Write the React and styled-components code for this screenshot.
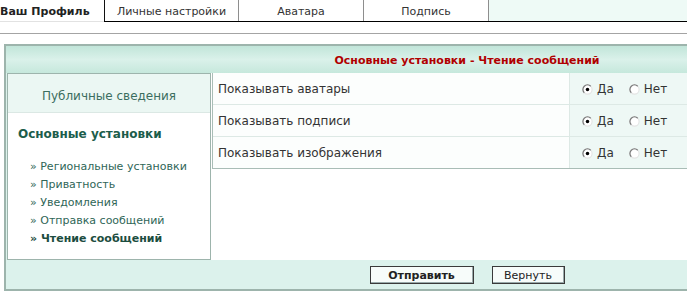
import React from "react";
import styled, { createGlobalStyle } from "styled-components";

const Global = createGlobalStyle`
  html, body { margin: 0; padding: 0; background: #fff; overflow: hidden; }
  body { font-family: "DejaVu Sans", Verdana, sans-serif; color: #333; }
`;

const Viewport = styled.div`
  width: 100vw;
  overflow: hidden;
`;

const Page = styled.div`
  width: 940px;
`;

const TabBar = styled.div`
  display: flex;
  height: 22px;
`;

const ActiveTab = styled.div`
  width: 104px;
  box-sizing: border-box;
  border-bottom: 1px solid #e2e2e2;
  font-size: 11px;
  font-weight: bold;
  color: #222;
  padding-top: 4px;
  line-height: 16px;
  white-space: nowrap;
`;

const TabGroup = styled.div`
  flex: 1;
  display: flex;
  border-bottom: 1px solid #000;
  background: #eefaf6;
`;

const Tab = styled.div`
  width: ${(p) => p.$w}px;
  box-sizing: border-box;
  background: #fff;
  border-left: 1px solid ${(p) => (p.$first ? "#111" : "#8e8e8e")};
  border-right: ${(p) => (p.$last ? "1px solid #8e8e8e" : "none")};
  font-size: 11px;
  color: #333;
  text-align: center;
  padding-top: 4px;
  line-height: 16px;
  white-space: nowrap;
`;

const Rule = styled.div`
  margin-top: 11px;
  height: 1px;
  background: #a4a4a4;
`;

const Box = styled.div`
  margin: 10px 0 0 4px;
  width: 926px;
  box-sizing: border-box;
  border: 2px solid #9db4ac;
  background: #dcf2ec;
`;

const Header = styled.div`
  height: 27px;
  background: linear-gradient(#c1e5d9 0%, #daf1ea 50%, #c6e8dc 100%);
  display: flex;
  align-items: center;
  justify-content: center;
  padding-top: 1px;
  box-sizing: border-box;
  font-size: 11px;
  font-weight: bold;
  color: #b00000;
`;

const Body = styled.div`
  display: flex;
  align-items: flex-start;
  padding-left: 1px;
`;

const Sidebar = styled.div`
  width: 204px;
  height: 187px;
  box-sizing: border-box;
  border: 1px solid #9db4ac;
  background: #fff;
`;

const PublicBlock = styled.div`
  height: 39px;
  box-sizing: border-box;
  background: #ebf7f3;
  border-bottom: 1px solid #dbe8e4;
  font-size: 12px;
  color: #3b6e5f;
  text-align: center;
  line-height: 44px;
`;

const SectionTitle = styled.div`
  margin: 13px 0 0 10px;
  font-size: 12px;
  font-weight: bold;
  color: #1c5d4b;
  line-height: 16px;
`;

const NavList = styled.ul`
  list-style: none;
  margin: 16px 0 0 22px;
  padding: 0;
`;

const NavItem = styled.li`
  font-size: 11px;
  line-height: 18px;
  color: ${(p) => (p.$active ? "#1c4d40" : "#2f6657")};
  font-weight: ${(p) => (p.$active ? "bold" : "normal")};
  white-space: nowrap;
`;

const Content = styled.div`
  flex: 1;
  height: 187px;
  background: #fff;
  padding-left: 1px;
`;

const Table = styled.div`
  border: 1px solid #a9bdb6;
  border-top: none;
`;

const Row = styled.div`
  display: flex;
  height: 31px;
  border-bottom: 1px solid #dde9e5;
  &:last-child { border-bottom: none; }
`;

const Label = styled.div`
  width: 357px;
  box-sizing: border-box;
  padding: 1px 0 0 5px;
  background: #fcfefd;
  display: flex;
  align-items: center;
  font-size: 12px;
  color: #333;
  border-right: 1px solid #dde9e5;
`;

const Options = styled.div`
  flex: 1;
  background: #eef8f5;
  display: flex;
  align-items: center;
  padding: 1px 0 0 12px;
  gap: 15px;
`;

const Option = styled.label`
  display: flex;
  align-items: center;
  gap: 4px;
  font-size: 12px;
  color: #333;
`;

const Footer = styled.div`
  height: 29px;
  display: flex;
  justify-content: center;
  align-items: flex-start;
  gap: 18px;
  padding-top: 6px;
  box-sizing: border-box;
`;

const Button = styled.button`
  width: ${(p) => p.$w}px;
  height: 18px;
  padding: 0;
  border: 1px solid #3a3a3a;
  box-shadow: inset -1px -1px 0 #9aa;
  background: #f7fcfa;
  font-family: "DejaVu Sans", Verdana, sans-serif;
  font-size: 11px;
  font-weight: ${(p) => (p.$primary ? "bold" : "normal")};
  color: #222;
`;

function Radio({ checked }) {
  return (
    <svg width="11" height="11" viewBox="0 0 12 12">
      <circle cx="6" cy="6" r="5" fill="#fff" stroke="#e4e4e4" strokeWidth="1.2" />
      <path d="M2.46 9.54 A5 5 0 0 1 9.54 2.46" fill="none" stroke="#7a7a7a" strokeWidth="1.3" />
      {checked && <circle cx="6" cy="6" r="1.9" fill="#000" />}
    </svg>
  );
}

const rows = ["Показывать аватары", "Показывать подписи", "Показывать изображения"];
const nav = [
  "Региональные установки",
  "Приватность",
  "Уведомления",
  "Отправка сообщений",
  "Чтение сообщений",
];

export default function App() {
  return (
    <Viewport>
      <Global />
      <Page>
        <TabBar>
          <ActiveTab>Ваш Профиль</ActiveTab>
          <TabGroup>
            <Tab $w={134} $first>Личные настройки</Tab>
            <Tab $w={125}>Аватара</Tab>
            <Tab $w={126} $last>Подпись</Tab>
          </TabGroup>
        </TabBar>
        <Rule />
        <Box>
          <Header>Основные установки - Чтение сообщений</Header>
          <Body>
            <Sidebar>
              <PublicBlock>Публичные сведения</PublicBlock>
              <SectionTitle>Основные установки</SectionTitle>
              <NavList>
                {nav.map((n, i) => (
                  <NavItem key={n} $active={i === nav.length - 1}>
                    » {n}
                  </NavItem>
                ))}
              </NavList>
            </Sidebar>
            <Content>
              <Table>
                {rows.map((r) => (
                  <Row key={r}>
                    <Label>{r}</Label>
                    <Options>
                      <Option>
                        <Radio checked /> Да
                      </Option>
                      <Option>
                        <Radio /> Нет
                      </Option>
                    </Options>
                  </Row>
                ))}
              </Table>
            </Content>
          </Body>
          <Footer>
            <Button $w={104} $primary>Отправить</Button>
            <Button $w={73}>Вернуть</Button>
          </Footer>
        </Box>
      </Page>
    </Viewport>
  );
}
